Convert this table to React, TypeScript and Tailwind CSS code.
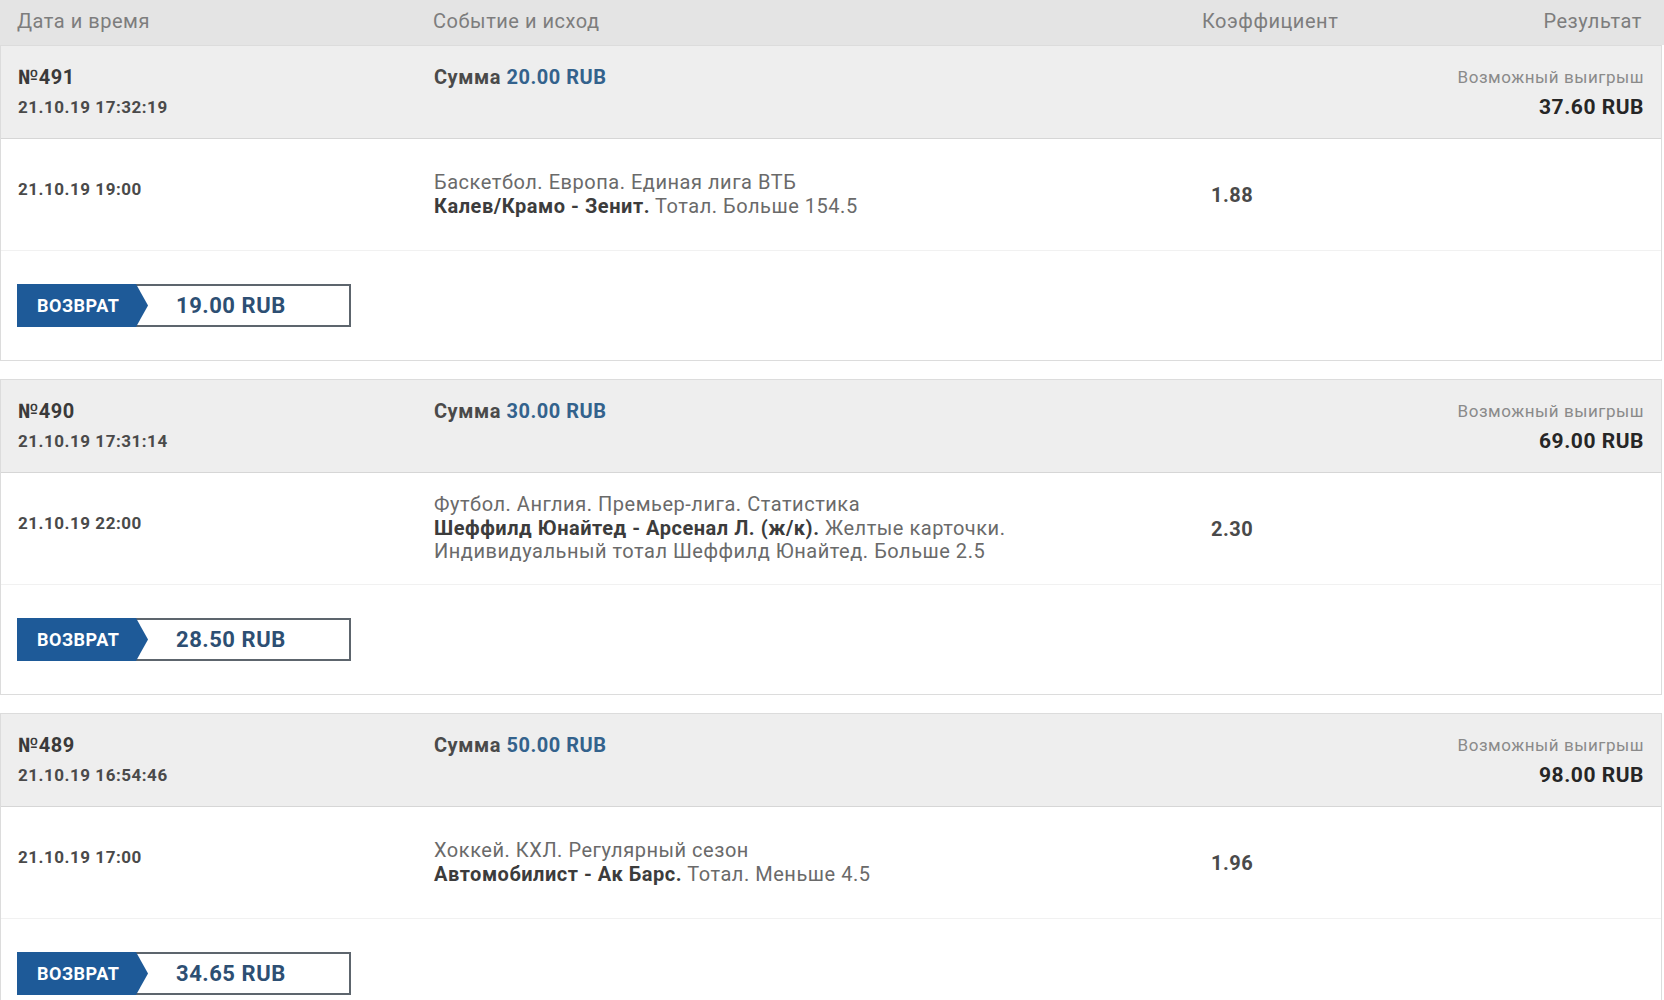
import React from 'react';

interface Bet {
  id: number;
  placed: string;
  stake: string;
  payout: string;
  start: string;
  league: string;
  teams: string;
  market: string;
  odds: string;
  refund: string;
}

const bets: Bet[] = [
  {
    id: 491,
    placed: '21.10.19 17:32:19',
    stake: '20.00 RUB',
    payout: '37.60 RUB',
    start: '21.10.19 19:00',
    league: 'Баскетбол. Европа. Единая лига ВТБ',
    teams: 'Калев/Крамо - Зенит.',
    market: 'Тотал. Больше 154.5',
    odds: '1.88',
    refund: '19.00 RUB',
  },
  {
    id: 490,
    placed: '21.10.19 17:31:14',
    stake: '30.00 RUB',
    payout: '69.00 RUB',
    start: '21.10.19 22:00',
    league: 'Футбол. Англия. Премьер-лига. Статистика',
    teams: 'Шеффилд Юнайтед - Арсенал Л. (ж/к).',
    market: 'Желтые карточки.\nИндивидуальный тотал Шеффилд Юнайтед. Больше 2.5',
    odds: '2.30',
    refund: '28.50 RUB',
  },
  {
    id: 489,
    placed: '21.10.19 16:54:46',
    stake: '50.00 RUB',
    payout: '98.00 RUB',
    start: '21.10.19 17:00',
    league: 'Хоккей. КХЛ. Регулярный сезон',
    teams: 'Автомобилист - Ак Барс.',
    market: 'Тотал. Меньше 4.5',
    odds: '1.96',
    refund: '34.65 RUB',
  },
];

const cols = 'grid grid-cols-[416px_769px_1fr_auto] pl-[17px]';

const RefundBadge: React.FC<{ amount: string }> = ({ amount }) => (
  <div className="flex h-[43px] w-[334px] items-center border-2 border-l-0 border-[#5d656d] bg-white">
    <div className="flex h-[43px] w-[131px] shrink-0 items-center bg-[#1e5a98] pl-[20px] [clip-path:polygon(0_0,119px_0,131px_50%,119px_100%,0_100%)]">
      <span className="text-[18px] font-bold text-white">ВОЗВРАТ</span>
    </div>
    <span className="ml-[28px] text-[22px] font-bold text-[#2d4f73]">{amount}</span>
  </div>
);

const BetBlock: React.FC<{ bet: Bet }> = ({ bet }) => {
  const [firstMarket, ...restMarket] = bet.market.split('\n');
  return (
    <div className="border border-[#dcdcdc]">
      <div className={`${cols} h-[92px] bg-[#eeeeee] pr-[17px] pt-[16px]`}>
        <div className="flex flex-col">
          <span className="text-[20px] font-bold leading-[30px] text-[#3a3a3a]">№{bet.id}</span>
          <span className="text-[17px] font-bold leading-[30px] text-[#4a4a4a]">{bet.placed}</span>
        </div>
        <div className="text-[20px] font-bold leading-[30px] text-[#4a4a4a]">
          Сумма <span className="text-[#33628c]">{bet.stake}</span>
        </div>
        <div />
        <div className="flex flex-col items-end">
          <span className="text-[17px] leading-[30px] text-[#8a8a8a]">Возможный выигрыш</span>
          <span className="text-[21px] font-bold leading-[30px] text-[#262626]">{bet.payout}</span>
        </div>
      </div>
      <div className={`${cols} h-[112px] items-center border-t border-[#d6d6d6] bg-white pr-[17px]`}>
        <span className="mb-[10px] text-[17px] font-bold text-[#4a4a4a]">{bet.start}</span>
        <div className="text-[20px] leading-[23.5px] text-[#6a6a6a]">
          <div>{bet.league}</div>
          <div>
            <span className="font-bold text-[#3c3c3c]">{bet.teams}</span> {firstMarket}
          </div>
          {restMarket.map((line) => (
            <div key={line}>{line}</div>
          ))}
        </div>
        <span className="pl-[8px] text-[20px] font-bold text-[#4a4a4a]">{bet.odds}</span>
        <div />
      </div>
      <div className="h-[110px] border-t border-[#f1f1f1] bg-white pl-[16px] pt-[33px]">
        <RefundBadge amount={bet.refund} />
      </div>
    </div>
  );
};

export default function App() {
  return (
    <div className="min-h-screen bg-white font-['Roboto',sans-serif] tracking-[0.033em]">
      <div className={`${cols} h-[45px] items-center bg-[#e4e4e4] pr-[22px] pb-[3px] text-[20px] text-[#7d7d7d]`}>
        <span>Дата и время</span>
        <span>Событие и исход</span>
        <span>Коэффициент</span>
        <span className="text-right">Результат</span>
      </div>
      <div className="flex flex-col gap-[18px] pr-[2px]">
        {bets.map((bet) => (
          <BetBlock key={bet.id} bet={bet} />
        ))}
      </div>
    </div>
  );
}
